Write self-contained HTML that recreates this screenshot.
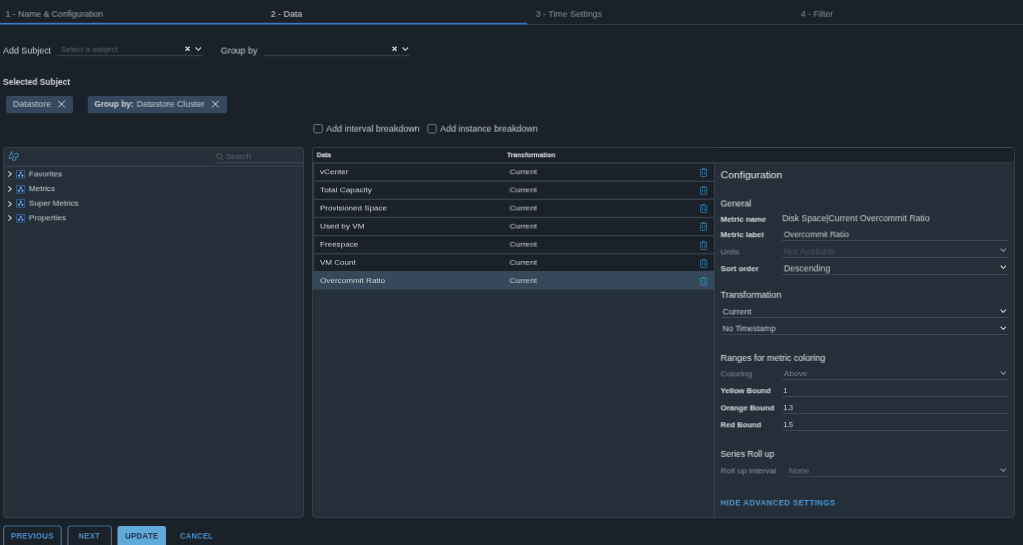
<!DOCTYPE html>
<html lang="en"><head><meta charset="utf-8"><title>Edit View - Data</title>
<style>
html,body{margin:0;padding:0;}
body{width:1023px;height:545px;overflow:hidden;background:#1b2128;position:relative;
font-family:"Liberation Sans",sans-serif;}
.b{position:absolute;display:block;}
.t{position:absolute;white-space:nowrap;line-height:12px;height:12px;transform-origin:0 50%;will-change:transform;}
</style></head>
<body>
<div class="b" style="left:527px;top:24px;width:496px;height:1px;background:#323946"></div>
<svg class="b" style="left:0;top:21px" width="528" height="5" viewBox="0 21 528 5"><rect x="0" y="22.8" width="527.1" height="1.8" fill="#3879c0"/></svg>
<svg class="b" style="left:50px;top:53px" width="370" height="5" viewBox="50 53 370 5"><rect x="57.2" y="54.8" width="146.3" height="1.45" fill="#323c47"/><rect x="263.8" y="54.8" width="145.9" height="1.45" fill="#323c47"/></svg>
<svg class="b" style="left:185px;top:46px" width="18" height="6" viewBox="0 0 18 6"><path d="M0.6 0.8 L4.6 4.8 M4.6 0.8 L0.6 4.8" stroke="#d0d6db" stroke-width="1.3" fill="none"/><path d="M10.6 1.5 L13.3 4.3 L16 1.5" stroke="#d0d6db" stroke-width="1.1" fill="none"/></svg>
<svg class="b" style="left:391.9px;top:46px" width="18" height="6" viewBox="0 0 18 6"><path d="M0.6 0.8 L4.6 4.8 M4.6 0.8 L0.6 4.8" stroke="#d0d6db" stroke-width="1.3" fill="none"/><path d="M10.6 1.5 L13.3 4.3 L16 1.5" stroke="#d0d6db" stroke-width="1.1" fill="none"/></svg>
<svg class="b" style="left:0;top:94px" width="232" height="22" viewBox="0 94 232 22"><rect x="6.1" y="96" width="66.9" height="17.3" rx="2.2" fill="#34495d"/><rect x="87.8" y="96" width="139.2" height="17.3" rx="2.2" fill="#34495d"/><path d="M58.3 100.8 L64.9 107.4 M64.9 100.8 L58.3 107.4 M212.1 100.8 L218.7 107.4 M218.7 100.8 L212.1 107.4" stroke="#dcdcda" stroke-width="0.95" fill="none"/></svg>
<svg class="b" style="left:310px;top:120px" width="132" height="18" viewBox="310 120 132 18"><rect x="313.8" y="124.45" width="8.5" height="8.5" rx="1.6" fill="none" stroke="#71777d" stroke-width="1"/><rect x="427.8" y="124.45" width="8.5" height="8.5" rx="1.6" fill="none" stroke="#71777d" stroke-width="1"/></svg>
<div class="b" style="left:3px;top:147px;width:301px;height:371px;box-sizing:border-box;background:#252f39;border:1px solid #333e4a;border-radius:3px"></div>
<svg class="b" style="left:4px;top:164px" width="299" height="4" viewBox="4 164 299 4"><rect x="4" y="165.6" width="299" height="1.35" fill="#35404c"/></svg>
<svg class="b" style="left:214px;top:160px" width="90" height="5" viewBox="214 160 90 5"><rect x="215.2" y="161.9" width="87.8" height="1.45" fill="#37424d"/></svg>
<svg class="b" style="left:8px;top:150px" width="12" height="12" viewBox="8 150 12 12"><path d="M11.5 151.5 L8.9 158.4 L12 158.4 M11.5 151.5 L13.1 155.6" stroke="#4a9ac6" stroke-width="0.85" fill="none" stroke-linejoin="round"/><path d="M14.3 153.9 L17.5 153.1 L18.2 156.5 L15.9 157.3" stroke="#4a9ac6" stroke-width="0.85" fill="none" stroke-linejoin="round"/><circle cx="14" cy="158.5" r="1.9" stroke="#4a9ac6" stroke-width="0.85" fill="none"/></svg>
<svg class="b" style="left:215.5px;top:152.8px" width="8" height="8" viewBox="0 0 16 16"><circle cx="6.6" cy="6.6" r="5.3" stroke="#6b6861" stroke-width="1.4" fill="none"/><path d="M10.6 10.8 L14.5 14.8" stroke="#6b6861" stroke-width="1.5"/></svg>
<svg class="b" style="left:7px;top:170.30px" width="6" height="8" viewBox="0 0 6 8"><path d="M1.3 1.3 L4.3 4 L1.3 6.7" stroke="#cfcfcc" stroke-width="1.1" fill="none"/></svg>
<svg class="b" style="left:15.9px;top:169.90px" width="9.4" height="9" viewBox="0 0 9.4 9"><rect x="0.7" y="0.75" width="8.1" height="7.3" fill="#1e2836" stroke="#426ea6" stroke-width="0.85"/><path d="M4.75 2.9 L4.75 4.3 M3 5.6 L3 4.3 L6.5 4.3 L6.5 5.6" stroke="#5f8fca" stroke-width="0.55" fill="none"/><circle cx="4.75" cy="2.7" r="1" fill="#8cbcf2"/><circle cx="3" cy="5.7" r="1" fill="#8cbcf2"/><circle cx="6.5" cy="5.7" r="1" fill="#8cbcf2"/></svg>
<svg class="b" style="left:7px;top:184.90px" width="6" height="8" viewBox="0 0 6 8"><path d="M1.3 1.3 L4.3 4 L1.3 6.7" stroke="#cfcfcc" stroke-width="1.1" fill="none"/></svg>
<svg class="b" style="left:15.9px;top:184.50px" width="9.4" height="9" viewBox="0 0 9.4 9"><rect x="0.7" y="0.75" width="8.1" height="7.3" fill="#1e2836" stroke="#426ea6" stroke-width="0.85"/><path d="M4.75 2.9 L4.75 4.3 M3 5.6 L3 4.3 L6.5 4.3 L6.5 5.6" stroke="#5f8fca" stroke-width="0.55" fill="none"/><circle cx="4.75" cy="2.7" r="1" fill="#8cbcf2"/><circle cx="3" cy="5.7" r="1" fill="#8cbcf2"/><circle cx="6.5" cy="5.7" r="1" fill="#8cbcf2"/></svg>
<svg class="b" style="left:7px;top:199.50px" width="6" height="8" viewBox="0 0 6 8"><path d="M1.3 1.3 L4.3 4 L1.3 6.7" stroke="#cfcfcc" stroke-width="1.1" fill="none"/></svg>
<svg class="b" style="left:15.9px;top:199.10px" width="9.4" height="9" viewBox="0 0 9.4 9"><rect x="0.7" y="0.75" width="8.1" height="7.3" fill="#1e2836" stroke="#426ea6" stroke-width="0.85"/><path d="M4.75 2.9 L4.75 4.3 M3 5.6 L3 4.3 L6.5 4.3 L6.5 5.6" stroke="#5f8fca" stroke-width="0.55" fill="none"/><circle cx="4.75" cy="2.7" r="1" fill="#8cbcf2"/><circle cx="3" cy="5.7" r="1" fill="#8cbcf2"/><circle cx="6.5" cy="5.7" r="1" fill="#8cbcf2"/></svg>
<svg class="b" style="left:7px;top:214.10px" width="6" height="8" viewBox="0 0 6 8"><path d="M1.3 1.3 L4.3 4 L1.3 6.7" stroke="#cfcfcc" stroke-width="1.1" fill="none"/></svg>
<svg class="b" style="left:15.9px;top:213.70px" width="9.4" height="9" viewBox="0 0 9.4 9"><rect x="0.7" y="0.75" width="8.1" height="7.3" fill="#1e2836" stroke="#426ea6" stroke-width="0.85"/><path d="M4.75 2.9 L4.75 4.3 M3 5.6 L3 4.3 L6.5 4.3 L6.5 5.6" stroke="#5f8fca" stroke-width="0.55" fill="none"/><circle cx="4.75" cy="2.7" r="1" fill="#8cbcf2"/><circle cx="3" cy="5.7" r="1" fill="#8cbcf2"/><circle cx="6.5" cy="5.7" r="1" fill="#8cbcf2"/></svg>
<div class="b" style="left:312px;top:147px;width:703px;height:371px;box-sizing:border-box;background:#252f39;border:1px solid #333e4a;border-radius:3px"></div>
<div class="b" style="left:313px;top:148px;width:701px;height:14px;background:#1b2128;border-radius:2px 2px 0 0"></div>
<div class="b" style="left:313px;top:162px;width:701px;height:1px;background:#303a45"></div>
<div class="b" style="left:715px;top:147px;width:297px;height:1px;background:#3b4652"></div>
<svg class="b" style="left:312px;top:162px" width="404" height="130" viewBox="0 0 404 130"><rect x="1" y="0.40" width="401.4" height="18.13" fill="#1b2128"/><rect x="1" y="18.53" width="401.4" height="18.13" fill="#1b2128"/><rect x="1" y="36.66" width="401.4" height="18.13" fill="#1b2128"/><rect x="1" y="54.79" width="401.4" height="18.13" fill="#1b2128"/><rect x="1" y="72.92" width="401.4" height="18.13" fill="#1b2128"/><rect x="1" y="91.05" width="401.4" height="18.13" fill="#1b2128"/><rect x="1" y="109.18" width="401.4" height="18.13" fill="#35495a"/><rect x="1" y="0.40" width="401.4" height="1.3" fill="#36414d"/><rect x="1" y="18.53" width="401.4" height="1.3" fill="#36414d"/><rect x="1" y="36.66" width="401.4" height="1.3" fill="#36414d"/><rect x="1" y="54.79" width="401.4" height="1.3" fill="#36414d"/><rect x="1" y="72.92" width="401.4" height="1.3" fill="#36414d"/><rect x="1" y="91.05" width="401.4" height="1.3" fill="#36414d"/><rect x="1" y="109.18" width="401.4" height="1.3" fill="#3c4a5a"/><rect x="1" y="126.41" width="401.4" height="0.9" fill="#3a4b5d"/><rect x="0.7" y="0.40" width="1.5" height="108.78" fill="#36414d"/><rect x="0.7" y="109.18" width="1.5" height="18.13" fill="#3b4c5f"/><rect x="402" y="0" width="1" height="130" fill="#36414d"/></svg>
<div class="b" style="left:714px;top:163px;width:1px;height:354px;background:#343f4b"></div>
<svg class="b" style="left:699px;top:167.00px" width="10" height="11" viewBox="699 167 10 11"><path d="M699.9 169.5 H707.3 M702.3 169.3 V168.3 H704.9 V169.3 M700.6 169.8 V175.8 Q700.6 176.5 701.3 176.5 H705.9 Q706.6 176.5 706.6 175.8 V169.8 M702.4 170.9 V174.9 M704.8 170.9 V174.9" stroke="#3b7ea7" stroke-width="0.72" fill="none"/></svg>
<svg class="b" style="left:699px;top:185.13px" width="10" height="11" viewBox="699 167 10 11"><path d="M699.9 169.5 H707.3 M702.3 169.3 V168.3 H704.9 V169.3 M700.6 169.8 V175.8 Q700.6 176.5 701.3 176.5 H705.9 Q706.6 176.5 706.6 175.8 V169.8 M702.4 170.9 V174.9 M704.8 170.9 V174.9" stroke="#3b7ea7" stroke-width="0.72" fill="none"/></svg>
<svg class="b" style="left:699px;top:203.26px" width="10" height="11" viewBox="699 167 10 11"><path d="M699.9 169.5 H707.3 M702.3 169.3 V168.3 H704.9 V169.3 M700.6 169.8 V175.8 Q700.6 176.5 701.3 176.5 H705.9 Q706.6 176.5 706.6 175.8 V169.8 M702.4 170.9 V174.9 M704.8 170.9 V174.9" stroke="#3b7ea7" stroke-width="0.72" fill="none"/></svg>
<svg class="b" style="left:699px;top:221.39px" width="10" height="11" viewBox="699 167 10 11"><path d="M699.9 169.5 H707.3 M702.3 169.3 V168.3 H704.9 V169.3 M700.6 169.8 V175.8 Q700.6 176.5 701.3 176.5 H705.9 Q706.6 176.5 706.6 175.8 V169.8 M702.4 170.9 V174.9 M704.8 170.9 V174.9" stroke="#3b7ea7" stroke-width="0.72" fill="none"/></svg>
<svg class="b" style="left:699px;top:239.52px" width="10" height="11" viewBox="699 167 10 11"><path d="M699.9 169.5 H707.3 M702.3 169.3 V168.3 H704.9 V169.3 M700.6 169.8 V175.8 Q700.6 176.5 701.3 176.5 H705.9 Q706.6 176.5 706.6 175.8 V169.8 M702.4 170.9 V174.9 M704.8 170.9 V174.9" stroke="#3b7ea7" stroke-width="0.72" fill="none"/></svg>
<svg class="b" style="left:699px;top:257.65px" width="10" height="11" viewBox="699 167 10 11"><path d="M699.9 169.5 H707.3 M702.3 169.3 V168.3 H704.9 V169.3 M700.6 169.8 V175.8 Q700.6 176.5 701.3 176.5 H705.9 Q706.6 176.5 706.6 175.8 V169.8 M702.4 170.9 V174.9 M704.8 170.9 V174.9" stroke="#3b7ea7" stroke-width="0.72" fill="none"/></svg>
<svg class="b" style="left:699px;top:275.78px" width="10" height="11" viewBox="699 167 10 11"><path d="M699.9 169.5 H707.3 M702.3 169.3 V168.3 H704.9 V169.3 M700.6 169.8 V175.8 Q700.6 176.5 701.3 176.5 H705.9 Q706.6 176.5 706.6 175.8 V169.8 M702.4 170.9 V174.9 M704.8 170.9 V174.9" stroke="#3f86b0" stroke-width="0.72" fill="none"/></svg>
<div class="b" style="left:782px;top:240px;width:226px;height:1px;background:#3d4853"></div>
<div class="b" style="left:782px;top:257px;width:226px;height:1px;background:#3d4853"></div>
<div class="b" style="left:782px;top:274px;width:226px;height:1px;background:#3d4853"></div>
<div class="b" style="left:782px;top:379px;width:226px;height:1px;background:#3d4853"></div>
<div class="b" style="left:782px;top:396px;width:226px;height:1px;background:#3d4853"></div>
<div class="b" style="left:782px;top:413px;width:226px;height:1px;background:#3d4853"></div>
<div class="b" style="left:782px;top:430px;width:226px;height:1px;background:#3d4853"></div>
<div class="b" style="left:720.5px;top:317px;width:287.5px;height:1px;background:#3d4853"></div>
<div class="b" style="left:720.5px;top:334px;width:287.5px;height:1px;background:#3d4853"></div>
<div class="b" style="left:787px;top:476px;width:221px;height:1px;background:#3a444f"></div>
<svg class="b" style="left:999.6px;top:248.40px" width="6.6" height="4.2" viewBox="0 0 6.6 4.2"><path d="M0.6 0.6 L3.3 3.4 L6 0.6" stroke="#8a9198" stroke-width="1.05" fill="none"/></svg>
<svg class="b" style="left:999.6px;top:265.40px" width="6.6" height="4.2" viewBox="0 0 6.6 4.2"><path d="M0.6 0.6 L3.3 3.4 L6 0.6" stroke="#d2d2d0" stroke-width="1.05" fill="none"/></svg>
<svg class="b" style="left:999.6px;top:308.60px" width="6.6" height="4.2" viewBox="0 0 6.6 4.2"><path d="M0.6 0.6 L3.3 3.4 L6 0.6" stroke="#d2d2d0" stroke-width="1.05" fill="none"/></svg>
<svg class="b" style="left:999.6px;top:325.60px" width="6.6" height="4.2" viewBox="0 0 6.6 4.2"><path d="M0.6 0.6 L3.3 3.4 L6 0.6" stroke="#d2d2d0" stroke-width="1.05" fill="none"/></svg>
<svg class="b" style="left:999.6px;top:370.60px" width="6.6" height="4.2" viewBox="0 0 6.6 4.2"><path d="M0.6 0.6 L3.3 3.4 L6 0.6" stroke="#8a9198" stroke-width="1.05" fill="none"/></svg>
<svg class="b" style="left:999.6px;top:467.80px" width="6.6" height="4.2" viewBox="0 0 6.6 4.2"><path d="M0.6 0.6 L3.3 3.4 L6 0.6" stroke="#8a9198" stroke-width="1.05" fill="none"/></svg>
<svg class="b" style="left:0;top:520px" width="230" height="25" viewBox="0 520 230 25"><rect x="3.65" y="526" width="57.55" height="30" rx="2.8" fill="none" stroke="#376f9a" stroke-width="1.2"/><rect x="67.9" y="526" width="43.5" height="30" rx="2.8" fill="none" stroke="#376f9a" stroke-width="1.2"/><rect x="117.5" y="525.95" width="48.5" height="30" rx="2.3" fill="#5fa9db"/></svg>
<span class="t" id="t0" style="left:5px;top:8px;font-size:8.2px;color:#98a1a9;transform:translate(0.60px,0.92px) scale(1.0553,0.9167) rotate(0.002deg);">1 - Name &amp; Configuration</span>
<span class="t" id="t1" style="left:270px;top:8px;font-size:8.2px;color:#d3d8dc;transform:translate(0.80px,0.92px) scale(1.0781,0.9167) rotate(0.002deg);">2 - Data</span>
<span class="t" id="t2" style="left:535px;top:8px;font-size:8.2px;color:#858e96;transform:translate(0.80px,0.92px) scale(1.0775,0.9167) rotate(0.002deg);">3 - Time Settings</span>
<span class="t" id="t3" style="left:800px;top:8px;font-size:8.2px;color:#858e96;transform:translate(0.80px,0.92px) scale(1.0722,0.9167) rotate(0.002deg);">4 - Filter</span>
<span class="t" id="t4" style="left:3px;top:44px;font-size:8.6px;color:#c5cdd4;transform:translate(0.00px,0.60px) scale(1.0379,1.0000) rotate(0.002deg);">Add Subject</span>
<span class="t" id="t5" style="left:60px;top:43px;font-size:7.6px;color:#56616b;transform:translate(0.80px,0.81px) scale(1.0632,1.0000) rotate(0.002deg);">Select a subject</span>
<span class="t" id="t6" style="left:220px;top:44px;font-size:8.6px;color:#c5cdd4;transform:translate(0.70px,0.60px) scale(1.0379,0.9993) rotate(0.002deg);">Group by</span>
<span class="t" id="t7" style="left:2px;top:75px;font-size:8.5px;color:#cdd4da;font-weight:700;transform:translate(0.90px,0.90px) scale(0.9878,1.0000) rotate(0.002deg);">Selected Subject</span>
<span class="t" id="t8" style="left:12px;top:98px;font-size:8.2px;color:#c3cbd2;transform:translate(0.70px,0.92px) scale(1.0789,0.9167) rotate(0.002deg);">Datastore</span>
<span class="t" id="t9" style="left:94px;top:98px;font-size:8.2px;color:#d3d9de;font-weight:700;transform:translate(0.40px,0.92px) scale(1.0019,0.9167) rotate(0.002deg);">Group by:</span>
<span class="t" id="t10" style="left:136px;top:98px;font-size:8.2px;color:#c3cbd2;transform:translate(0.60px,0.92px) scale(1.0672,0.9167) rotate(0.002deg);">Datastore Cluster</span>
<span class="t" id="t11" style="left:326px;top:122px;font-size:8.6px;color:#c0c8cf;transform:translate(0.20px,0.70px) scale(1.0422,1.0007) rotate(0.002deg);">Add interval breakdown</span>
<span class="t" id="t12" style="left:440px;top:122px;font-size:8.6px;color:#c0c8cf;transform:translate(0.20px,0.70px) scale(1.0380,1.0000) rotate(0.002deg);">Add instance breakdown</span>
<span class="t" id="t13" style="left:225px;top:151px;font-size:8.2px;color:#59646f;transform:translate(0.80px,0.40px) scale(0.9671,0.9000) rotate(0.002deg);">Search</span>
<span class="t" id="t14" style="left:28px;top:168px;font-size:7.6px;color:#c3cbd2;transform:translate(0.80px,0.68px) scale(1.0693,1.0300) rotate(0.002deg);">Favorites</span>
<span class="t" id="t15" style="left:28px;top:183px;font-size:7.6px;color:#c3cbd2;transform:translate(0.80px,0.27px) scale(1.0707,1.0291) rotate(0.002deg);">Metrics</span>
<span class="t" id="t16" style="left:28px;top:197px;font-size:7.6px;color:#c3cbd2;transform:translate(0.80px,0.87px) scale(1.0652,1.0282) rotate(0.002deg);">Super Metrics</span>
<span class="t" id="t17" style="left:28px;top:212px;font-size:7.6px;color:#c3cbd2;transform:translate(0.80px,0.49px) scale(1.0801,1.0309) rotate(0.002deg);">Properties</span>
<span class="t" id="t18" style="left:316px;top:149px;font-size:6.9px;color:#e3e8ec;font-weight:700;transform:translate(0.70px,0.38px) scale(0.9640,0.9386) rotate(0.002deg);">Data</span>
<span class="t" id="t19" style="left:507px;top:149px;font-size:6.9px;color:#e3e8ec;font-weight:700;transform:translate(0.10px,0.38px) scale(0.9630,0.9393) rotate(0.002deg);">Transformation</span>
<span class="t" id="t20" style="left:320px;top:166px;font-size:7.4px;color:#ccd3d9;transform:translate(0.00px,0.30px) scale(1.1046,0.9400) rotate(0.002deg);">vCenter</span>
<span class="t" id="t21" style="left:509px;top:166px;font-size:7.4px;color:#ccd3d9;transform:translate(0.60px,0.30px) scale(1.1032,0.9400) rotate(0.002deg);">Current</span>
<span class="t" id="t22" style="left:320px;top:184px;font-size:7.4px;color:#ccd3d9;transform:translate(0.00px,0.41px) scale(1.1202,0.9400) rotate(0.002deg);">Total Capacity</span>
<span class="t" id="t23" style="left:509px;top:184px;font-size:7.4px;color:#ccd3d9;transform:translate(0.60px,0.41px) scale(1.1032,0.9400) rotate(0.002deg);">Current</span>
<span class="t" id="t24" style="left:320px;top:202px;font-size:7.4px;color:#ccd3d9;transform:translate(0.00px,0.52px) scale(1.0886,0.9400) rotate(0.002deg);">Provisioned Space</span>
<span class="t" id="t25" style="left:509px;top:202px;font-size:7.4px;color:#ccd3d9;transform:translate(0.60px,0.52px) scale(1.1032,0.9400) rotate(0.002deg);">Current</span>
<span class="t" id="t26" style="left:320px;top:220px;font-size:7.4px;color:#ccd3d9;transform:translate(0.00px,0.63px) scale(1.1052,0.9400) rotate(0.002deg);">Used by VM</span>
<span class="t" id="t27" style="left:509px;top:220px;font-size:7.4px;color:#ccd3d9;transform:translate(0.60px,0.63px) scale(1.1032,0.9392) rotate(0.002deg);">Current</span>
<span class="t" id="t28" style="left:320px;top:238px;font-size:7.4px;color:#ccd3d9;transform:translate(0.00px,0.75px) scale(1.0939,0.9400) rotate(0.002deg);">Freespace</span>
<span class="t" id="t29" style="left:509px;top:238px;font-size:7.4px;color:#ccd3d9;transform:translate(0.60px,0.74px) scale(1.1032,0.9383) rotate(0.002deg);">Current</span>
<span class="t" id="t30" style="left:320px;top:256px;font-size:7.4px;color:#ccd3d9;transform:translate(0.00px,0.91px) scale(1.0890,0.9400) rotate(0.002deg);">VM Count</span>
<span class="t" id="t31" style="left:509px;top:256px;font-size:7.4px;color:#ccd3d9;transform:translate(0.60px,0.92px) scale(1.1032,0.9400) rotate(0.002deg);">Current</span>
<span class="t" id="t32" style="left:320px;top:275px;font-size:7.4px;color:#ccd3d9;transform:translate(0.00px,0.06px) scale(1.0991,0.9400) rotate(0.002deg);">Overcommit Ratio</span>
<span class="t" id="t33" style="left:509px;top:275px;font-size:7.4px;color:#ccd3d9;transform:translate(0.60px,0.06px) scale(1.1032,0.9392) rotate(0.002deg);">Current</span>
<span class="t" id="t34" style="left:720px;top:169px;font-size:10.0px;color:#dfe4e8;transform:translate(0.70px,0.70px) scale(1.0356,0.8750) rotate(0.002deg);">Configuration</span>
<span class="t" id="t35" style="left:720px;top:197px;font-size:8.6px;color:#dfe4e8;transform:translate(0.60px,0.50px) scale(1.0040,0.9993) rotate(0.002deg);">General</span>
<span class="t" id="t36" style="left:720px;top:214px;font-size:7.6px;color:#d8dee3;font-weight:700;transform:translate(0.60px,0.04px) scale(1.0287,1.0393) rotate(0.002deg);">Metric name</span>
<span class="t" id="t37" style="left:782px;top:212px;font-size:8.6px;color:#c3cbd2;transform:translate(0.20px,0.20px) scale(1.0136,0.9986) rotate(0.002deg);">Disk Space|Current Overcommit Ratio</span>
<span class="t" id="t38" style="left:720px;top:229px;font-size:7.6px;color:#d8dee3;font-weight:700;transform:translate(0.60px,0.44px) scale(1.0316,1.0393) rotate(0.002deg);">Metric label</span>
<span class="t" id="t39" style="left:783px;top:229px;font-size:8.2px;color:#c3cbd2;transform:translate(0.80px,0.33px) scale(0.9952,0.9173) rotate(0.002deg);">Overcommit Ratio</span>
<span class="t" id="t40" style="left:720px;top:246px;font-size:7.8px;color:#838d97;transform:translate(0.60px,0.64px) scale(1.0582,1.0391) rotate(0.002deg);">Units</span>
<span class="t" id="t41" style="left:783px;top:245px;font-size:8.6px;color:#48535e;transform:translate(0.80px,0.60px) scale(1.0397,0.9993) rotate(0.002deg);">Not Available</span>
<span class="t" id="t42" style="left:720px;top:263px;font-size:7.6px;color:#d8dee3;font-weight:700;transform:translate(0.60px,0.44px) scale(1.0349,1.0393) rotate(0.002deg);">Sort order</span>
<span class="t" id="t43" style="left:783px;top:262px;font-size:8.6px;color:#c3cbd2;transform:translate(0.80px,0.39px) scale(1.0222,0.9993) rotate(0.002deg);">Descending</span>
<span class="t" id="t44" style="left:720px;top:288px;font-size:8.6px;color:#dfe4e8;transform:translate(0.60px,0.81px) scale(1.0559,1.0007) rotate(0.002deg);">Transformation</span>
<span class="t" id="t45" style="left:722px;top:306px;font-size:8.2px;color:#c3cbd2;transform:translate(0.60px,0.58px) scale(1.0618,0.9167) rotate(0.002deg);">Current</span>
<span class="t" id="t46" style="left:722px;top:323px;font-size:8.2px;color:#c3cbd2;transform:translate(0.60px,0.41px) scale(1.0041,0.9160) rotate(0.002deg);">No Timestamp</span>
<span class="t" id="t47" style="left:720px;top:351px;font-size:8.6px;color:#dfe4e8;transform:translate(0.60px,0.90px) scale(1.0437,0.9986) rotate(0.002deg);">Ranges for metric coloring</span>
<span class="t" id="t48" style="left:720px;top:368px;font-size:7.8px;color:#838d97;transform:translate(0.60px,0.63px) scale(1.0810,1.0382) rotate(0.002deg);">Coloring</span>
<span class="t" id="t49" style="left:784px;top:368px;font-size:7.8px;color:#747e89;transform:translate(0.00px,0.24px) scale(1.0584,1.0400) rotate(0.002deg);">Above</span>
<span class="t" id="t50" style="left:720px;top:385px;font-size:7.6px;color:#d8dee3;font-weight:700;transform:translate(0.60px,0.43px) scale(1.0081,1.0393) rotate(0.002deg);">Yellow Bound</span>
<span class="t" id="t51" style="left:783px;top:385px;font-size:8.2px;color:#c3cbd2;transform:translate(0.40px,0.39px) scale(0.8328,0.8833) rotate(0.002deg);">1</span>
<span class="t" id="t52" style="left:720px;top:402px;font-size:7.6px;color:#d8dee3;font-weight:700;transform:translate(0.60px,0.64px) scale(1.0202,1.0407) rotate(0.002deg);">Orange Bound</span>
<span class="t" id="t53" style="left:783px;top:402px;font-size:8.2px;color:#c3cbd2;transform:translate(0.40px,0.45px) scale(0.8428,0.8825) rotate(0.002deg);">1.3</span>
<span class="t" id="t54" style="left:720px;top:419px;font-size:7.6px;color:#d8dee3;font-weight:700;transform:translate(0.60px,0.54px) scale(1.0025,1.0393) rotate(0.002deg);">Red Bound</span>
<span class="t" id="t55" style="left:783px;top:419px;font-size:8.2px;color:#c3cbd2;transform:translate(0.40px,0.45px) scale(0.8428,0.8825) rotate(0.002deg);">1.5</span>
<span class="t" id="t56" style="left:720px;top:447px;font-size:8.6px;color:#dfe4e8;transform:translate(0.60px,0.90px) scale(1.0037,0.9986) rotate(0.002deg);">Series Roll up</span>
<span class="t" id="t57" style="left:720px;top:465px;font-size:7.8px;color:#8b959e;transform:translate(0.60px,0.54px) scale(1.0760,1.0400) rotate(0.002deg);">Roll up interval</span>
<span class="t" id="t58" style="left:788px;top:465px;font-size:8.2px;color:#717b86;transform:translate(0.80px,0.71px) scale(1.0522,0.9167) rotate(0.002deg);">None</span>
<span class="t" id="t59" style="left:720px;top:497px;font-size:8.2px;color:#4a97d2;font-weight:700;letter-spacing:0.05em;transform:translate(0.60px,0.59px) scale(0.9601,0.9162) rotate(0.002deg);">HIDE ADVANCED SETTINGS</span>
<span class="t" id="t60" style="left:10px;top:530px;font-size:8.2px;color:#4a90cf;font-weight:700;letter-spacing:0.04em;transform:translate(0.90px,0.82px) scale(0.9527,0.9162) rotate(0.002deg);">PREVIOUS</span>
<span class="t" id="t61" style="left:78px;top:530px;font-size:8.2px;color:#4a90cf;font-weight:700;letter-spacing:0.04em;transform:translate(0.60px,0.81px) scale(0.9330,0.9162) rotate(0.002deg);">NEXT</span>
<span class="t" id="t62" style="left:125px;top:530px;font-size:8.2px;color:#1e2f3f;font-weight:700;letter-spacing:0.04em;transform:translate(0.20px,0.81px) scale(0.9480,0.9187) rotate(0.002deg);">UPDATE</span>
<span class="t" id="t63" style="left:180px;top:530px;font-size:8.2px;color:#4a90cf;font-weight:700;letter-spacing:0.04em;transform:translate(0.10px,0.81px) scale(0.9143,0.9162) rotate(0.002deg);">CANCEL</span>
</body></html>
